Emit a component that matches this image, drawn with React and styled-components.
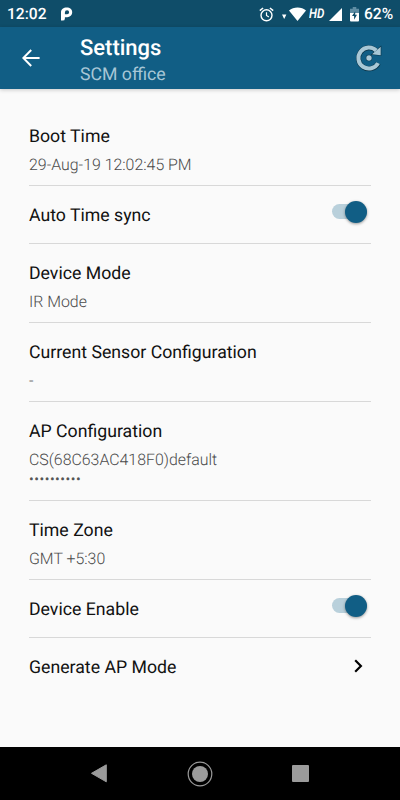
import styled, { createGlobalStyle } from "styled-components";

const GlobalStyle = createGlobalStyle`
  * {
    box-sizing: border-box;
  }
  body {
    margin: 0;
    background: #fafafa;
    font-family: Roboto, "Noto Sans", sans-serif;
    text-rendering: geometricPrecision;
  }
`;

function App() {
  return (
    <Screen>
      <GlobalStyle />
      <StatusBar>
        <Clock>12:02</Clock>
        <svg width="12" height="14" viewBox="0 0 12 14" fill="#fff">
          <path
            fillRule="evenodd"
            d="M0 5.500C0 2.200 2.500.5 5.700.5 9 .5 11.200 2.500 11.200 5.300s-2.200 4.900-5 4.900H3.900v1.200q0 2.200-2.200 2.200H0zM3.900 7.300h2.200a2 2 0 0 0 0-4q-2.200 0-2.200 2.200z"
          />
        </svg>
        <StatusIcons>
          <svg width="15" height="15" viewBox="0 0 15 15" fill="none" stroke="#fff">
            <circle cx="7.500" cy="8.300" r="5.500" strokeWidth="1.400" />
            <path d="M7.500 5.200v3.300l2.400 1.500" strokeWidth="1.200" />
            <path d="M.8 3.700 4.100 1M14.200 3.700 10.900 1" strokeWidth="1.500" />
          </svg>
          <svg width="24" height="15" viewBox="0 0 24 15" fill="#fff">
            <path d="M0 7.400h4.400L2.200 12z" />
            <path d="M7 3.600C11.400-.4 19.800-.4 24 3.600L15.500 14z" />
          </svg>
          <Hd>HD</Hd>
          <svg width="13" height="13" viewBox="0 0 13 13" fill="#fff">
            <path d="M13 0v13H0z" />
          </svg>
          <svg width="9" height="15" viewBox="0 0 9 15">
            <path d="M2.700 0h3.600v1.700H9V6H0V1.700h2.700z" fill="#5f8da3" />
            <path d="M0 6h9v7.500q0 1-1 1H1q-1 0-1-1z" fill="#fff" />
            <path d="M5.200 4.200 2 9h2.100v3.700L7 7.700H5.200z" fill="#0f4d69" />
          </svg>
          <Percent>62%</Percent>
        </StatusIcons>
      </StatusBar>
      <AppBar>
        <svg width="18" height="18" viewBox="0 0 18 18">
          <path
            d="M17.600 9H1.800M9.200 1 1.300 9l7.900 8"
            fill="none"
            stroke="#fff"
            strokeWidth="2"
          />
        </svg>
        <Heading>
          <Title>Settings</Title>
          <SubTitle>SCM office</SubTitle>
        </Heading>
        <svg width="28" height="28" viewBox="0 0 28 28">
          <g stroke="#0b3448" strokeWidth="1.200" fill="#0b3448">
            <path d="M23.300 19.200A10.500 10.500 0 1 1 20.500 6" fill="none" strokeWidth="5.100" />
            <path d="M25.700 2.800v8.400l-8.700-1z" />
            <circle cx="14" cy="14" r="2.600" />
          </g>
          <g fill="#a9c8d6">
            <path
              d="M23.100 19.100A10.500 10.500 0 1 1 21.200 6.500"
              fill="none"
              stroke="#a9c8d6"
              strokeWidth="4"
            />
            <path d="M25.700 2.800v8.400l-8.700-1z" />
            <circle cx="14" cy="14" r="2.700" />
          </g>
        </svg>
      </AppBar>
      <List>
        <Row $height={79}>
          <Label>Boot Time</Label>
          <Value>29-Aug-19 12:02:45 PM</Value>
        </Row>
        <Row $height={58}>
          <Line>
            <Label>Auto Time sync</Label>
            <Toggle />
          </Line>
        </Row>
        <Row $height={79}>
          <Label>Device Mode</Label>
          <Value>IR Mode</Value>
        </Row>
        <Row $height={79}>
          <Label>Current Sensor Configuration</Label>
          <Value>-</Value>
        </Row>
        <Row $height={99}>
          <Label>AP Configuration</Label>
          <Value>CS(68C63AC418F0)default</Value>
          <Password>••••••••••</Password>
        </Row>
        <Row $height={79}>
          <Label>Time Zone</Label>
          <Value>GMT +5:30</Value>
        </Row>
        <Row $height={58}>
          <Line>
            <Label>Device Enable</Label>
            <Toggle />
          </Line>
        </Row>
        <Row $height={58} $last>
          <Line>
            <Label>Generate AP Mode</Label>
            <Chevron width="9" height="14" viewBox="0 0 9 14">
              <path d="M1.200 1.300 6.900 7l-5.700 5.700" fill="none" stroke="#000" strokeWidth="2.200" />
            </Chevron>
          </Line>
        </Row>
      </List>
      <NavBar>
        <svg width="16" height="19" viewBox="0 0 16 19">
          <path d="M15.300.8v17L.5 9.300z" fill="#9b9b9b" stroke="#9b9b9b" strokeLinejoin="round" />
        </svg>
        <svg width="26" height="26" viewBox="0 0 26 26">
          <circle cx="13" cy="13" r="11.800" fill="none" stroke="#9b9b9b" strokeWidth="1.200" />
          <circle cx="13" cy="13" r="8" fill="#9b9b9b" />
        </svg>
        <Recent />
      </NavBar>
    </Screen>
  );
}

function Toggle() {
  return (
    <Track>
      <Thumb />
    </Track>
  );
}

const Screen = styled.div`
  display: flex;
  flex-direction: column;
  width: 400px;
  height: 800px;
  background: #fafafa;
`;

const StatusBar = styled.div`
  display: flex;
  align-items: center;
  height: 27px;
  padding: 1px 7px 0;
  background: #0f4d69;
  color: #fff;
`;

const Clock = styled.span`
  width: 54px;
  font-size: 15.6px;
  font-weight: 500;
  line-height: 20px;
`;

const StatusIcons = styled.div`
  display: flex;
  align-items: center;
  margin-left: auto;

  > svg {
    flex: none;
  }
  > svg + svg {
    margin-left: 8px;
  }
`;

const Hd = styled.span`
  width: 17px;
  margin: 0 3px;
  font-size: 13.5px;
  font-style: italic;
  font-weight: 600;
  line-height: 16px;
  transform: scaleX(0.86);
  transform-origin: left;
`;

const Percent = styled.span`
  width: 29px;
  margin-left: 5px;
  font-size: 15.6px;
  font-weight: 500;
  line-height: 20px;
  white-space: nowrap;
`;

const AppBar = styled.header`
  display: flex;
  align-items: center;
  height: 62px;
  padding: 0 17px 0 22px;
  background: #115e85;
  box-shadow: 0 1px 4px rgba(0, 0, 0, 0.2);
`;

const Heading = styled.div`
  flex: 1;
  padding: 5px 0 0 40px;
`;

const Title = styled.h1`
  margin: 0;
  color: #fff;
  font-size: 22px;
  font-weight: 500;
  line-height: 28px;
`;

const SubTitle = styled.div`
  color: #a7c6d6;
  font-size: 17.7px;
  line-height: 24px;
`;

const List = styled.main`
  flex: 1;
  padding: 18px 29px 0;
`;

const Row = styled.section`
  height: ${(props) => props.$height}px;
  padding-top: 17px;
  border-bottom: ${(props) => (props.$last ? "none" : "1px solid #d8d8d8")};
`;

const Line = styled.div`
  display: flex;
  justify-content: space-between;
`;

const Label = styled.div`
  color: #111;
  font-size: 17.7px;
  line-height: 27px;
`;

const Value = styled.div`
  margin-top: 4px;
  color: #4a4a4a;
  font-size: 15.9px;
  font-weight: 300;
  line-height: 20px;
`;

const Password = styled.div`
  color: #555;
  font-size: 14px;
  line-height: 20px;
  letter-spacing: 0.5px;
`;

const Track = styled.div`
  display: flex;
  align-items: center;
  justify-content: flex-end;
  width: 35px;
  height: 15px;
  margin: 1px 4px 0 0;
  border-radius: 8px;
  background: #b9d0db;
`;

const Thumb = styled.div`
  width: 22px;
  height: 22px;
  border-radius: 50%;
  background: #115e85;
  box-shadow: 0 1px 3px rgba(0, 0, 0, 0.4);
`;

const Chevron = styled.svg`
  margin: 4px 8px 0 0;
`;

const NavBar = styled.nav`
  display: flex;
  align-items: center;
  justify-content: space-between;
  height: 53px;
  padding: 0 91px;
  background: #000;
`;

const Recent = styled.div`
  width: 17px;
  height: 17px;
  border-radius: 1px;
  background: #9b9b9b;
`;

export default App;
